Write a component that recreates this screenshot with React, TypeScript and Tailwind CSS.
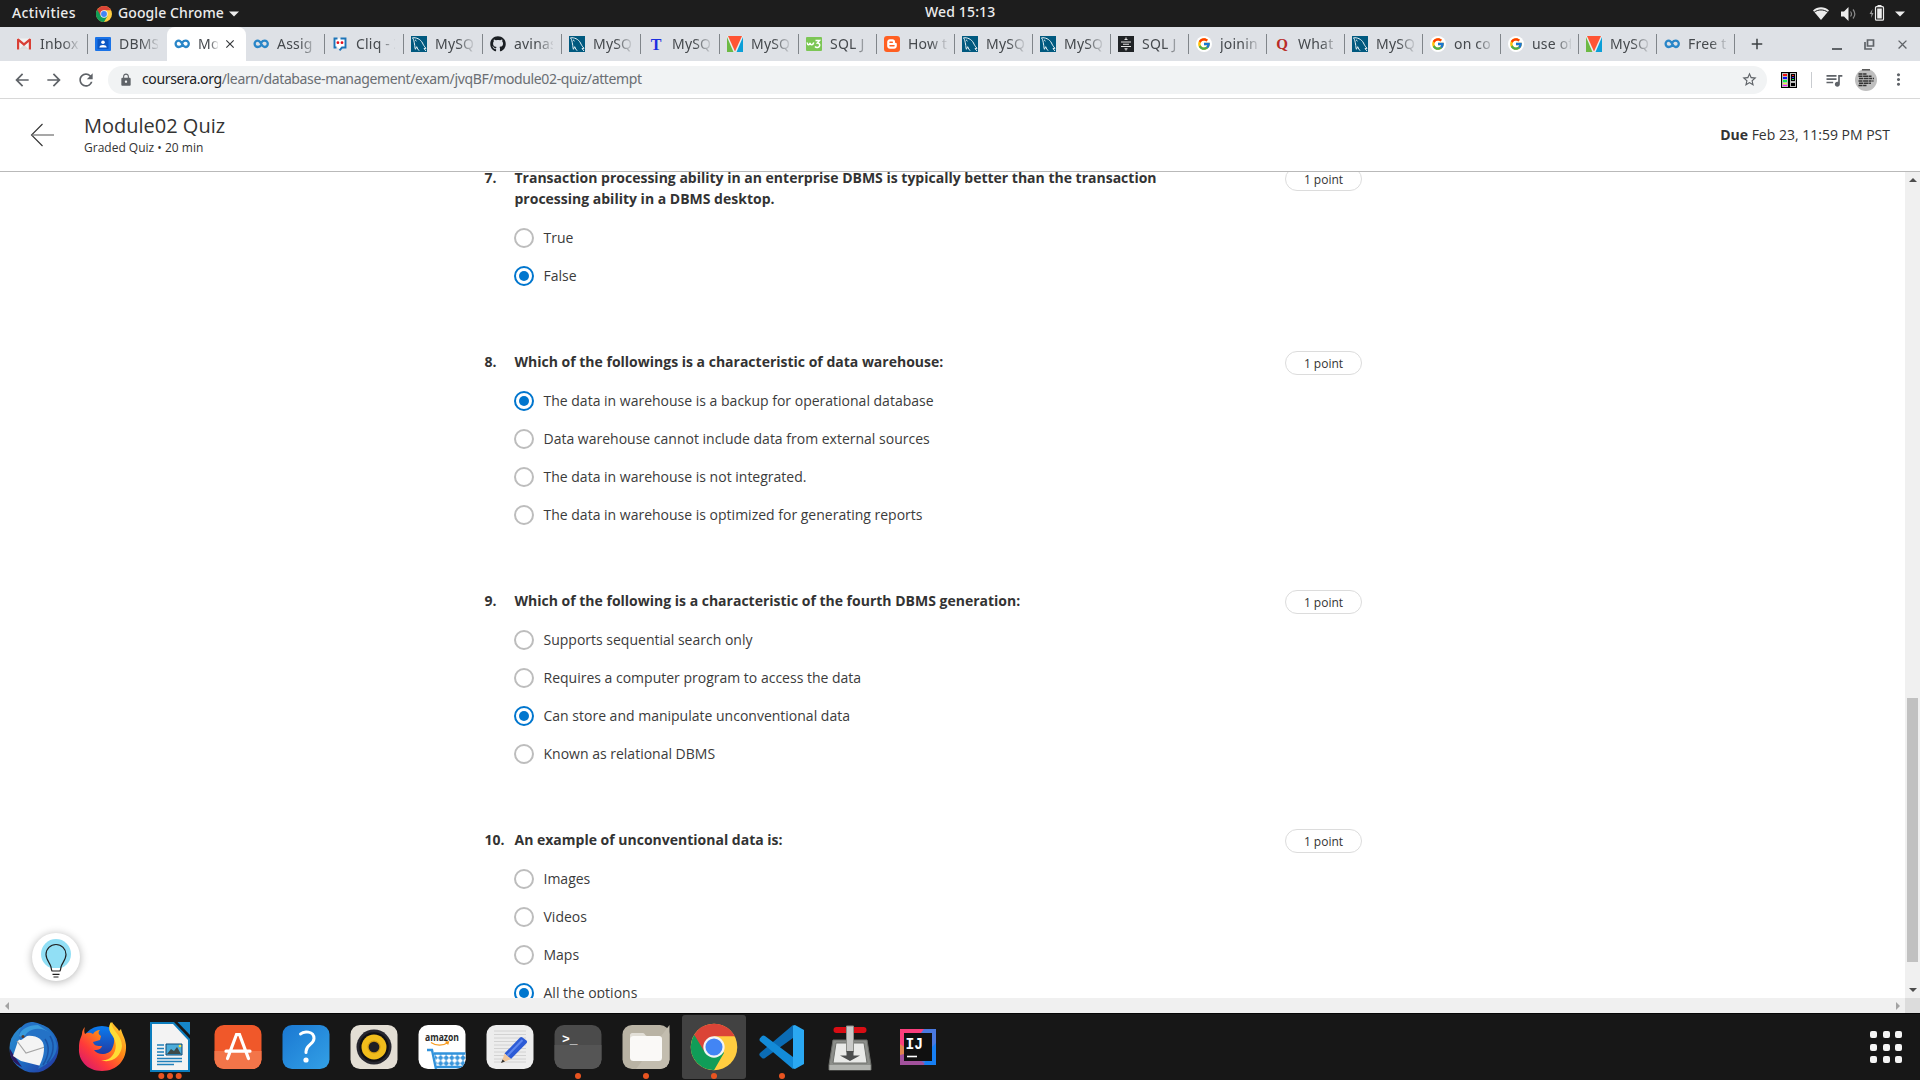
import type { ReactNode } from "react";
import { FcGoogle } from "react-icons/fc";
import { FaGithub } from "react-icons/fa";
import { MdLock, MdStarBorder, MdMoreVert, MdArrowBack, MdArrowForward, MdRefresh, MdQueueMusic, MdClose, MdAdd } from "react-icons/md";

/* ---------- Favicons ---------- */

const Fav = ({ children }: { children: ReactNode }) => (
  <svg width="16" height="16" viewBox="0 0 16 16" className="shrink-0">{children}</svg>
);

const Gmail = () => (
  <Fav>
    <path d="M1 2.500h14v11H1z" fill="#f2f2f2" />
    <path d="M3 13.500l5-5 5 5z" fill="#dcdcdc" />
    <path d="M1 3v10.500h2.200V6L8 10l4.800-4v7.500H15V3l-1.600-.6L8 7 2.600 2.400z" fill="#d93f35" />
  </Fav>
);
const Classroom = () => (
  <Fav>
    <rect x="0" y="1" width="16" height="14" rx="1" fill="#1a73e8" />
    <rect x="2.500" y="3" width="11" height="10" fill="#0b57c4" />
    <circle cx="8" cy="6.300" r="1.800" fill="#fff" />
    <path d="M4.300 11.500c0-3.300 7.400-3.300 7.400 0z" fill="#fff" />
  </Fav>
);
const Coursera = () => (
  <Fav>
    <path d="M8.200 9.200C7.400 10.400 6.200 11 4.800 11a3.200 3.200 0 0 1 0-6.400c3.400 0 3.400 6.400 6.800 6.400a3.200 3.200 0 0 0 0-6.400c-1.400 0-2.400.6-3.200 1.800" fill="none" stroke="#2a86c8" strokeWidth="2.300" />
  </Fav>
);
const Cliq = () => (
  <Fav>
    <path d="M5 2.500H2.500v9H6l2 2.500 2-2.500h3.500v-9H5z" fill="#fff" />
    <path d="M4.500 11.500h-2v-9h3M8.500 2.500h5v9H10l-2.500 2.800" fill="none" stroke="#1d74b8" strokeWidth="1.900" />
    <circle cx="5.900" cy="6.700" r="1.400" fill="#e5111b" />
    <circle cx="10" cy="6.700" r="1.400" fill="#e5111b" />
  </Fav>
);
const MySql = () => (
  <Fav>
    <rect width="16" height="16" fill="#00597f" />
    <path d="M1.500 1.800C5 1.300 9.500 3 11.500 7c.6 1.400 1.500 3.200 3.500 5.300l-2 .3 2 2.400M1.500 1.800C3 4 3 5.500 3.500 8c.5 2.300.2 3.500.9 5.300l1.300-2.600c.6 1.800 1.400 3 2.400 4M4 3.800l1.500 1.300" fill="none" stroke="#e6f1f5" strokeWidth="1" />
  </Fav>
);
const LetterT = () => (
  <Fav>
    <text x="8" y="13.500" textAnchor="middle" fontSize="16" fontWeight="700" fill="#1c2fe0" fontFamily="Liberation Serif, serif">T</text>
  </Fav>
);
const Vee = () => (
  <Fav>
    <rect width="16" height="16" fill="#e8eef0" />
    <path d="M0 1v15h6.500z" fill="#6cb944" />
    <path d="M16 1v15H9.500z" fill="#0b9fd8" />
    <path d="M1 0h14L8 15.500z" fill="#ff5434" />
  </Fav>
);
const W3 = () => (
  <Fav>
    <rect y="1" width="16" height="14" rx="1" fill="#7cc655" />
    <path d="M1.200 6.500c.3 3 2.300 3 2.800.3.500 2.700 2.800 2.700 3.800-.3M9.500 4.500h4L11.300 7c3.500.2 3 4.800-.3 4.400-.9 0-1.500-.4-2-1" fill="none" stroke="#fff" strokeWidth="1.500" />
  </Fav>
);
const Blogger = () => (
  <Fav>
    <rect width="16" height="16" rx="3" fill="#ff5f22" />
    <path d="M5.800 3.300h2.700c1.500 0 2.600 1.100 2.600 2.600 0 .9.300 1.100 1 1.200.5.100.7.400.7.900v2c0 1.600-1.200 2.700-2.700 2.700H5.900c-1.500 0-2.700-1.200-2.700-2.700V6c0-1.500 1.200-2.700 2.600-2.700z" fill="#fff" />
    <path d="M6 6.200h2.300M6 9.800h4" stroke="#ff5f22" strokeWidth="1.500" strokeLinecap="round" />
  </Fav>
);
const DarkStack = () => (
  <Fav>
    <rect width="16" height="16" fill="#202326" />
    <path d="M6.500 3.500h3M8 1.500v2M3 6h10M5 8.200h6M3 10.500h10M6.500 12.700h3M8 12.500v2" stroke="#e3e3e3" strokeWidth="1.100" />
  </Fav>
);
const Google = () => (
  <span className="flex size-4 shrink-0 items-center justify-center rounded-full bg-white">
    <FcGoogle className="size-[14px]" />
  </span>
);
const Quora = () => (
  <Fav>
    <text x="8" y="13" textAnchor="middle" fontSize="15" fontWeight="700" fill="#b92b27" fontFamily="Liberation Serif, serif">Q</text>
  </Fav>
);
const GitHub = () => <FaGithub className="size-4 shrink-0 text-[#1b1f23]" />;

type TabData = { icon: () => ReactNode; label: string; active?: boolean; noSep?: boolean };
const wideTabs: TabData[] = [
  { icon: Gmail, label: "Inbox" },
  { icon: Classroom, label: "DBMS", noSep: true },
  { icon: Coursera, label: "Mo", active: true, noSep: true },
  { icon: Coursera, label: "Assig" },
  { icon: Cliq, label: "Cliq - Z" },
  { icon: MySql, label: "MySQ" },
  { icon: GitHub, label: "avinas" },
  { icon: MySql, label: "MySQ" },
  { icon: LetterT, label: "MySQ" },
  { icon: Vee, label: "MySQ" },
];
const narrowTabs: TabData[] = [
  { icon: W3, label: "SQL J" },
  { icon: Blogger, label: "How t" },
  { icon: MySql, label: "MySQ" },
  { icon: MySql, label: "MySQ" },
  { icon: DarkStack, label: "SQL J" },
  { icon: Google, label: "joinin" },
  { icon: Quora, label: "What" },
  { icon: MySql, label: "MySQ" },
  { icon: Google, label: "on co" },
  { icon: Google, label: "use of" },
  { icon: Vee, label: "MySQ" },
  { icon: Coursera, label: "Free t" },
];

function Tab({ tab, wide }: { tab: TabData; wide?: boolean }) {
  const Icon = tab.icon;
  return (
    <div className={`relative flex h-full shrink-0 items-center pl-[7px] ${wide ? "w-[79px]" : "w-[78px]"} ${tab.active ? "rounded-t-lg bg-white" : ""}`}>
      <Icon />
      <span
        className={`ml-2 overflow-hidden whitespace-nowrap text-[14px] leading-5 tracking-[0.2px] text-[#45494d] [mask-image:linear-gradient(to_right,black_58%,transparent_105%)] ${tab.active ? "w-[20px]" : "w-[39px]"}`}
      >
        {tab.label}
      </span>
      {tab.active && <MdClose className="ml-[5px] size-[14px] shrink-0 text-[#35383b]" />}
      {!tab.noSep && <span className="absolute right-0 top-[7px] h-5 w-px bg-[#80858a]" />}
    </div>
  );
}

const ChromeArt = () => (
  <>
    <circle cx="24" cy="24" r="24" fill="#ffcd40" />
    <path d="M3.600 11.300A24 24 0 0 0 24 48L34.400 30 24 24z" fill="#109d58" />
    <path d="M24 0A24 24 0 0 0 3.600 11.500L13.600 28 24 13h21.400A24 24 0 0 0 24 0z" fill="#db4437" />
    <circle cx="24" cy="24" r="11" fill="#f4f4f4" />
    <circle cx="24" cy="24" r="8.800" fill="#4285f4" />
  </>
);

/* ---------- System and browser chrome ---------- */

function TopBar() {
  return (
    <div className="relative flex h-[27px] shrink-0 items-center justify-between bg-[#1d1d1d] font-['Noto_Sans',sans-serif] text-[14px] font-medium leading-none text-[#ececec]">
      <div className="flex items-center pl-3">
        <span className="mb-[2px] w-[64px] whitespace-nowrap tracking-[0.36px]">Activities</span>
        <svg width="16" height="16" viewBox="0 0 48 48" className="ml-[20px]"><ChromeArt /></svg>
        <span className="mb-[2px] ml-[6px] w-[106px] whitespace-nowrap tracking-[0.1px]">Google Chrome</span>
        <svg width="10" height="6" viewBox="0 0 10 6" className="ml-[5px]"><path d="M0 .5h10L5 5.500z" fill="#ececec" /></svg>
      </div>
      <span className="absolute left-[925px] top-[5px] whitespace-nowrap tracking-[0.15px]">Wed 15:13</span>
      <div className="flex items-center pr-[15px]">
        <svg width="16" height="13" viewBox="0 0 16 13"><path d="M0 3.500C4.500-.7 11.500-.7 16 3.500L8 13z" fill="#ececec" /><path d="M1.200 5.200c4-3 9.600-3 13.600 0" stroke="#1d1d1d" strokeWidth="1" fill="none" /></svg>
        <svg width="16" height="14" viewBox="0 0 16 14" className="ml-[12px]"><path d="M0 4.500h3L7.500 0v14L3 9.500H0z" fill="#ececec" /><path d="M9.500 4.500c1.200 1.500 1.200 3.500 0 5M12 2.500c2.200 2.700 2.200 6.300 0 9" stroke="#8a8a8a" strokeWidth="1.200" fill="none" /></svg>
        <svg width="16" height="16" viewBox="0 0 16 16" className="mb-[2px] ml-[12px]"><path d="M3.500 4L.5 9H2.500L2 13l2.500-5H2.800z" fill="#9a9a9a" /><path d="M8.500 0h4v1.500h-4z" fill="#ececec" /><rect x="6.500" y="1.700" width="8" height="13.500" rx="1" fill="none" stroke="#ececec" strokeWidth="1.200" /><path d="M8.200 3.500h4.600v10H8.200z" fill="#ececec" /></svg>
        <svg width="10" height="6" viewBox="0 0 10 6" className="ml-[10px]"><path d="M0 .5h10L5 5.500z" fill="#ececec" /></svg>
      </div>
    </div>
  );
}

function TabStrip() {
  return (
    <div className="flex h-[34px] shrink-0 items-center bg-[#dee1e6] pl-[9px] font-['Noto_Sans',sans-serif]">
      {wideTabs.map((t, i) => <Tab key={i} tab={t} wide />)}
      {narrowTabs.map((t, i) => <Tab key={i} tab={t} />)}
      <MdAdd className="ml-[13px] size-[18px] text-[#3c4043]" />
      <div className="ml-auto flex items-center pr-[10px] text-[#5f6368]">
        <span className="mt-[9px] h-[2px] w-[10px] bg-[#5f6368]" />
        <svg width="11" height="11" viewBox="0 0 11 11" className="ml-[22px] mr-[20px]" fill="none" stroke="#5f6368" strokeWidth="1.700"><path d="M3.500 1h6v6h-6zM1 3v7h7" /></svg>
        <MdClose className="size-[15px]" />
      </div>
    </div>
  );
}

function Toolbar() {
  return (
    <div className="flex h-[38px] shrink-0 items-center border-b border-[#d8d8d8] bg-white pl-3 font-['Noto_Sans',sans-serif] text-[#5f6368]">
      <MdArrowBack className="size-5" />
      <MdArrowForward className="ml-3 size-5" />
      <MdRefresh className="ml-3 size-5" />
      <div className="ml-3 flex h-7 w-[1659px] items-center rounded-full bg-[#f1f3f4] pl-[11px] pr-[9px]">
        <MdLock className="size-[14px]" />
        <span className="mb-[2px] ml-[9px] whitespace-nowrap text-[14px] leading-5 tracking-[-0.36px] text-[#6a6e73]">
          <span className="text-[#202124]">coursera.org</span>/learn/database-management/exam/jvqBF/module02-quiz/attempt
        </span>
        <MdStarBorder className="ml-auto size-[17px]" />
      </div>
      <svg width="16" height="16" viewBox="0 0 16 16" className="ml-[14px] shrink-0">
        <rect width="16" height="16" />
        <path d="M1 1h6v14H1zM9 1h6v14H9z" fill="#bdbdbd" />
        <path d="M2 2h4v2H2z" fill="#e11" /><path d="M2 5h4v2H2z" fill="#11e" /><path d="M2 8h4v2H2z" fill="#1e5" /><path d="M2 11h4v1H2z" fill="#ee4" /><path d="M2 13h4v1H2z" fill="#f1f" />
        <path d="M10 2h4v7h-4zM10 11h4v3h-4z" /><path d="M11 3h2v1h-2z" fill="#e22" /><path d="M11 5h2v1h-2z" fill="#33f" /><path d="M11 7h2v1h-2z" fill="#1e5" />
      </svg>
      <span className="ml-[14px] h-4 w-px bg-[#c9ccd0]" />
      <MdQueueMusic className="ml-[12px] size-5" />
      <svg width="22" height="22" viewBox="0 0 22 22" className="ml-[11px] shrink-0">
        <circle cx="11" cy="11" r="11" fill="#bfbfbf" />
        <path d="M7 .8h8" stroke="#555" strokeWidth="1.500" />
        <path d="M3.500 5h8M3.500 7.300h13M4 9.600h15M3.500 11.900h15M4 14.200h12M3.500 16.500h8" stroke="#333" strokeWidth="1.500" strokeDasharray="4 .6 5 .5 3 .7" />
      </svg>
      <MdMoreVert className="ml-[12px] size-[19px]" />
    </div>
  );
}

/* ---------- Quiz page ---------- */

type Question = { n: number; text: string; options: string[]; selected: number };
const questions: Question[] = [
  { n: 7, text: "Transaction processing ability in an enterprise DBMS is typically better than the transaction processing ability in a DBMS desktop.", options: ["True", "False"], selected: 1 },
  { n: 8, text: "Which of the followings is a characteristic of data warehouse:", options: ["The data in warehouse is a backup for operational database", "Data warehouse cannot include data from external sources", "The data in warehouse is not integrated.", "The data in warehouse is optimized for generating reports"], selected: 0 },
  { n: 9, text: "Which of the following is a characteristic of the fourth DBMS generation:", options: ["Supports sequential search only", "Requires a computer program to access the data", "Can store and manipulate unconventional data", "Known as relational DBMS"], selected: 2 },
  { n: 10, text: "An example of unconventional data is:", options: ["Images", "Videos", "Maps", "All the options"], selected: 3 },
];

function Radio({ on }: { on: boolean }) {
  return (
    <span className={`flex size-5 shrink-0 items-center justify-center rounded-full border-2 bg-white ${on ? "border-[#0076ce]" : "border-[#bdbdbd]"}`}>
      {on && <span className="size-[10px] rounded-full bg-[#0076ce]" />}
    </span>
  );
}

function QuestionBlock({ q }: { q: Question }) {
  return (
    <section className="flex items-start">
      <span className="w-[30px] shrink-0 text-[14px] font-bold leading-[21px] text-[#333]">{q.n}.</span>
      <div className="w-[660px]">
        <p className="text-[14px] font-bold leading-[21px] text-[#333]">{q.text}</p>
        <div className="pt-[10px]">
          {q.options.map((o, i) => (
            <label key={i} className="-ml-[0.500px] flex h-[38px] items-center gap-[9.500px] text-[14px] text-[#3b3b3b]">
              <Radio on={i === q.selected} />
              <span className="pb-[2px]">{o}</span>
            </label>
          ))}
        </div>
      </div>
      <span className="ml-[110.500px] flex h-6 w-[77px] items-center justify-center rounded-full border border-[#dcdcdc] pt-px text-[12px] text-[#333]">1 point</span>
    </section>
  );
}

function Page() {
  return (
    <div className="relative flex min-h-0 flex-1 flex-col bg-white font-['Open_Sans',sans-serif]">
      <header className="flex h-[73px] shrink-0 items-center border-b border-[#b9b9b9] pl-[30px] pr-[30px] text-[#333]">
        <svg width="24" height="24" viewBox="0 0 24 24" fill="none" stroke="#333" strokeWidth="1.100"><path d="M12.500 1L1.500 12l11 11" /><path d="M1.500 12H24" stroke="#777" strokeWidth="1.300" /></svg>
        <div className="ml-[30px]">
          <h1 className="-mt-px mb-px text-[20px] leading-[26px]">Module02 Quiz</h1>
          <p className="text-[12px] leading-[16px]">Graded Quiz • 20 min</p>
        </div>
        <div className="ml-auto pb-[2px] text-[14px]"><b>Due</b> Feb 23, 11:59 PM PST</div>
      </header>
      <div className="flex min-h-0 flex-1">
        <main className="h-full flex-1 overflow-hidden pl-[484.500px]">
          <div className="-mt-[5px] flex flex-col gap-14">
            {questions.map((q) => <QuestionBlock key={q.n} q={q} />)}
          </div>
        </main>
        <div className="flex w-[15px] flex-col items-center bg-[#f0f0f0]">
          <svg width="8" height="4" viewBox="0 0 8 4" className="mt-[6px]"><path d="M4 0l4 4H0z" fill="#4d4d4d" /></svg>
          <div className="mt-auto h-[264px] w-[11px] bg-[#c1c1c1]" />
          <svg width="8" height="4" viewBox="0 0 8 4" className="mb-[6px] mt-[26px]"><path d="M4 4l4-4H0z" fill="#4d4d4d" /></svg>
        </div>
      </div>
      <div className="flex h-[15px] shrink-0 items-center bg-[#f0f0f0]">
        <svg width="4" height="8" viewBox="0 0 4 8" className="ml-[5px]"><path d="M0 4l4-4v8z" fill="#a3a3a3" /></svg>
        <svg width="4" height="8" viewBox="0 0 4 8" className="ml-auto mr-[5px]"><path d="M4 4L0 0v8z" fill="#a3a3a3" /></svg>
        <span className="h-full w-[15px] bg-[#dcdcdc]" />
      </div>
      <button aria-label="Tips" className="absolute bottom-[32px] left-[32px] flex size-12 rounded-full bg-white shadow-[0_1px_8px_rgba(0,0,0,0.3)]">
        <svg width="48" height="48" viewBox="0 0 48 48" fill="none" stroke="#1f1f1f" strokeWidth="1.200">
          <circle cx="24" cy="21" r="15" fill="#91dff5" stroke="none" />
          <path d="M19 35h10l-.6 3h-9z" fill="#fff" stroke="none" />
          <path d="M20 38c-.9-1.300-.7-3.300-1.300-5C17.800 30 14 26.500 14 21.500a10 10 0 0 1 20 0c0 5-3.800 8.500-4.700 11.500-.6 1.700-.4 3.700-1.300 5zM20.500 41.300h7M21.500 44h5" />
        </svg>
      </button>
    </div>
  );
}

/* ---------- Dock ---------- */

const Tile = ({ fill }: { fill: string }) => <rect x="10.500" y="12" width="47" height="44" rx="9.500" fill={fill} />;

const dockIcons: { art: ReactNode; dots?: number; active?: boolean }[] = [
  {
    art: (
      <>
        <defs><linearGradient id="tb" x1="0" y1="0" x2="1" y2="1"><stop offset="0" stopColor="#2f8fd0" /><stop offset=".5" stopColor="#1e6fc4" /><stop offset="1" stopColor="#24309c" /></linearGradient></defs>
        <circle cx="34" cy="35" r="24.500" fill="url(#tb)" />
        <path d="M10 36C9 44 13 50 22 54L13 41z" fill="#2a1a62" />
        <path d="M13 43l5-15c6-8 20-8 26-2l1 16-4 11-20-5z" fill="#f4f4f4" />
        <path d="M17 28l9 12 19-6" fill="none" stroke="#a5a5a5" strokeWidth="1.200" />
        <path d="M31 9c-9 1-13 8-12 17 1 3 5-1 8-3 9-1 17 3 17 12 0 9-3 14-6 21 9-4 19-12 19-23-2-14-15-24-26-24z" fill="#2472c6" />
        <path d="M19 23c2-7 9-11 19-11l12 8c-7-5-16-6-23 0-2 3-5 5-8 3z" fill="#3a9bdc" />
        <path d="M45 26c5 7 4 17-2 26M50 23c5 8 4 18-3 27" stroke="#1b52a4" strokeWidth="1.500" fill="none" />
        <circle cx="23" cy="23.500" r="1.500" fill="#5b3a2a" />
      </>
    ),
  },
  {
    art: (
      <>
        <defs>
          <linearGradient id="ffx" x1="1" y1="0" x2=".1" y2="1"><stop offset="0" stopColor="#ffe03a" /><stop offset=".4" stopColor="#ff8a16" /><stop offset=".7" stopColor="#ff3a3a" /><stop offset="1" stopColor="#d31575" /></linearGradient>
          <linearGradient id="ffb" x1="0" y1="0" x2="0" y2="1"><stop offset="0" stopColor="#0a7cf0" /><stop offset="1" stopColor="#2b1a7c" /></linearGradient>
        </defs>
        <circle cx="34" cy="34" r="21" fill="url(#ffb)" />
        <path d="M17 14c-1 3-1 5 0 7 3-2 6-1 8 0 2-3 4-4 7-4-2 2-2 4 1 6l-1 4-7 2c1 4 4 4 9 4-1 4-5 4-8 4 4 6 15 5 18-1 4-8 2-15-2-20-1-3 0-5 2-7 3 5 6 6 7 9l2-2c1 5 4 8 5 16 1 15-9 26-24 26S10 47 11 35c0-8 2-10 3-14 0-3 1-5 3-7z" fill="url(#ffx)" />
        <path d="M43 9c-3 5-2 9 1 13 5 7 5 15 0 21-3 4-8 5-12 4 11 4 21-3 22-14 0-11-10-15-11-24z" fill="#ffdc35" />
      </>
    ),
  },
  {
    dots: 3,
    art: (
      <>
        <path d="M14 9h24l16 17v33H14z" fill="#0c7dbd" />
        <path d="M16 11h21l15 16v30H16z" fill="#f3f3f3" />
        <path d="M41.500 9H54v13z" fill="#1687ca" />
        <path d="M21 32h7M21 35.500h7M21 39h7M21 42.200h7M21 45.500h25M21 48.500h25M21 51.500h17" stroke="#2181bb" strokeWidth="1.400" />
        <path d="M30 31h16v11H30z" fill="#4bacd9" stroke="#0d4a78" />
        <path d="M31 41l4-5 3 2 3-4 4 7z" fill="#3e4a48" />
        <circle cx="44" cy="33" r="1.300" fill="#f6e13a" />
      </>
    ),
  },
  {
    art: (
      <>
        <Tile fill="#f0582a" />
        <path d="M10.500 38h47v8.500a9.500 9.500 0 0 1-9.500 9.500H20a9.500 9.500 0 0 1-9.500-9.500z" fill="#f37549" />
        <path d="M23.500 45.500L32.500 21.500h3L44.500 45.500M22 38.200h24" stroke="#fff" strokeWidth="3.200" fill="none" strokeLinecap="round" />
      </>
    ),
  },
  {
    art: (
      <>
        <defs><linearGradient id="hp" x1="0" y1="0" x2="1" y2="1"><stop offset="0" stopColor="#1a78d2" /><stop offset="1" stopColor="#33a0e6" /></linearGradient></defs>
        <Tile fill="url(#hp)" />
        <path d="M28.500 21c3-3 13.500-3.500 13.500 4.500 0 6-8 6-8 13v1" stroke="#fff" strokeWidth="3" fill="none" strokeLinecap="round" />
        <circle cx="34" cy="47" r="2.600" fill="#fff" />
      </>
    ),
  },
  {
    art: (
      <>
        <Tile fill="#e3ded4" />
        <circle cx="34" cy="34" r="17.500" fill="#26262e" />
        <circle cx="34" cy="34" r="14.800" fill="#101014" />
        <circle cx="34" cy="34" r="12.500" fill="#f1bd1c" />
        <circle cx="34" cy="34" r="6.500" fill="#d29a10" />
        <circle cx="34" cy="34" r="5.300" fill="#1f1f24" />
      </>
    ),
  },
  {
    art: (
      <>
        <defs>
          <pattern id="mesh" width="5.600" height="5.600" patternUnits="userSpaceOnUse" x="27"><rect width="5.600" height="5.600" fill="#3a96dc" /><path d="M2.800 .1L5.500 2.800 2.800 5.500 .1 2.800z" fill="#fff" /></pattern>
          <clipPath id="az"><rect x="10.500" y="12" width="47" height="44" rx="9.500" /></clipPath>
        </defs>
        <Tile fill="#fff" />
        <g clipPath="url(#az)">
          <path d="M26 40h33v13H29z" fill="url(#mesh)" />
          <path d="M19 37h5l4 19M26 40.500h32M28 54h30" stroke="#3293dc" strokeWidth="2.400" fill="none" />
        </g>
        <text x="34" y="28" textAnchor="middle" textLength="34" lengthAdjust="spacingAndGlyphs" fontSize="11" fontWeight="700" fill="#2b2b2b" fontFamily="Open Sans, sans-serif">amazon</text>
        <path d="M23 29.500c5 3.500 12 3.500 17 0M37.500 29h3l-.8 2.500" stroke="#f79b1e" strokeWidth="1.300" fill="none" />
      </>
    ),
  },
  {
    art: (
      <>
        <Tile fill="#ededed" />
        <path d="M18 18h32M18 21.500h32M18 25h32M18 28.500h32M18 32h32M18 35.500h32M18 39h32M18 42.500h32M18 46h32M18 49h32" stroke="#cfcfcf" strokeWidth=".9" />
        <path d="M44 24.500a2 2 0 0 1 2.500 0l4 3a2 2 0 0 1 .2 2.500L35 46l-6.500-5.500z" fill="#2c5bd6" />
        <path d="M46.500 27l-15.500 16" stroke="#5d86ee" strokeWidth="2" />
        <path d="M28.500 40.500L35 46l-9.500 3.800z" fill="#f0c69a" />
        <path d="M26.500 46.500l2.500 2-4 1.500z" fill="#333" />
      </>
    ),
  },
  {
    dots: 1,
    art: (
      <>
        <Tile fill="#4b4b4b" />
        <path d="M10.500 32h47v14.500a9.500 9.500 0 0 1-9.500 9.500H20a9.500 9.500 0 0 1-9.500-9.500z" fill="#555" />
        <text x="18" y="29.500" fontSize="13" fontWeight="700" fill="#fff" fontFamily="Liberation Mono, monospace">&gt;_</text>
      </>
    ),
  },
  {
    dots: 1,
    art: (
      <>
        <Tile fill="#b9b3a4" />
        <path d="M57.500 12L24 56h24a9.500 9.500 0 0 0 9.500-9.500z" fill="#c3bdaf" />
        <path d="M20 20h11c2 0 2 3 4 3h12c2 0 3 1 3 3v8H18V22c0-1 1-2 2-2z" fill="#e2dfd7" />
        <rect x="18" y="23" width="32" height="25" rx="3.500" fill="#faf9f7" />
      </>
    ),
  },
  {
    dots: 1,
    active: true,
    art: <g transform="translate(10.700 10.700) scale(.97)"><ChromeArt /></g>,
  },
  {
    dots: 1,
    art: (
      <>
        <path d="M12.500 39.500L45 12v13L17 45c-1 .7-2 .7-3 0l-2-2c-1-1-1-2.500.5-3.500z" fill="#0b6cb5" />
        <path d="M12.500 28.500c-1.300-1-1.300-2.500-.3-3.500L14 23c1-.8 2-.8 3 0l28 21v12z" fill="#138bd8" />
        <path d="M45 12.500L47 12l9 5v34l-9 5-2-.5z" fill="#2aa8f2" />
      </>
    ),
  },
  {
    art: (
      <>
        <path d="M17 27h34l4 25v5H13v-5z" fill="#8c8e8a" stroke="#6a6c68" />
        <path d="M20 30h28l3 20H17z" fill="#e9eae8" stroke="#70726e" />
        <path d="M13.500 52h41v5h-41z" fill="#b2b4b0" />
        <rect x="17.500" y="14" width="33" height="6" rx="3" fill="#d90d14" />
        <path d="M30.500 13h7v26h-7z" fill="#c9cac8" stroke="#8b8d89" />
        <path d="M30.500 38h7v4.500h6.500L34 48l-10-5.500h6.500z" fill="#4c4e4e" />
      </>
    ),
  },
  {
    art: (
      <>
        <path d="M16 16h36v36H16z" fill="#4a79e0" />
        <path d="M16 16h24L26 34 16 36z" fill="#fb3f7d" />
        <path d="M16 31l12 8-8 13h-4z" fill="#e08450" />
        <path d="M16 42l12-3 14 13H16z" fill="#a2519c" />
        <path d="M44 38l8-8v22H40z" fill="#177ff3" />
        <path d="M20 20h28v28H20z" fill="#101010" />
        <text x="21.500" y="35.500" fontSize="16" fontWeight="700" fill="#fff" textLength="17.500" lengthAdjust="spacingAndGlyphs" fontFamily="Liberation Mono, monospace">IJ</text>
        <path d="M23 43.500h10" stroke="#fff" strokeWidth="1.600" />
      </>
    ),
  },
];

function Dock() {
  return (
    <div className="flex h-[67px] shrink-0 items-center border-t border-[#050505] bg-[#171717]">
      {dockIcons.map((d, i) => (
        <svg key={i} width="68" height="67" viewBox="0 0 68 67" className="-mt-px shrink-0">
          {d.active && <rect x="2" y="2" width="64" height="64" rx="3" fill="#424242" />}
          {d.art}
          {Array.from({ length: d.dots ?? 0 }, (_, k) => (
            <circle key={k} cx={34 + (k - ((d.dots ?? 1) - 1) / 2) * 8.7} cy="63" r="3" fill="#e95420" />
          ))}
        </svg>
      ))}
      <div className="ml-auto mr-[18px] grid grid-cols-3 gap-[5.500px]">
        {Array.from({ length: 9 }, (_, i) => <span key={i} className="size-[7px] rounded-[2px] bg-[#f5f5f5]" />)}
      </div>
    </div>
  );
}

export default function App() {
  return (
    <div className="flex h-[1080px] w-[1920px] flex-col overflow-hidden">
      <TopBar />
      <TabStrip />
      <Toolbar />
      <Page />
      <Dock />
    </div>
  );
}
